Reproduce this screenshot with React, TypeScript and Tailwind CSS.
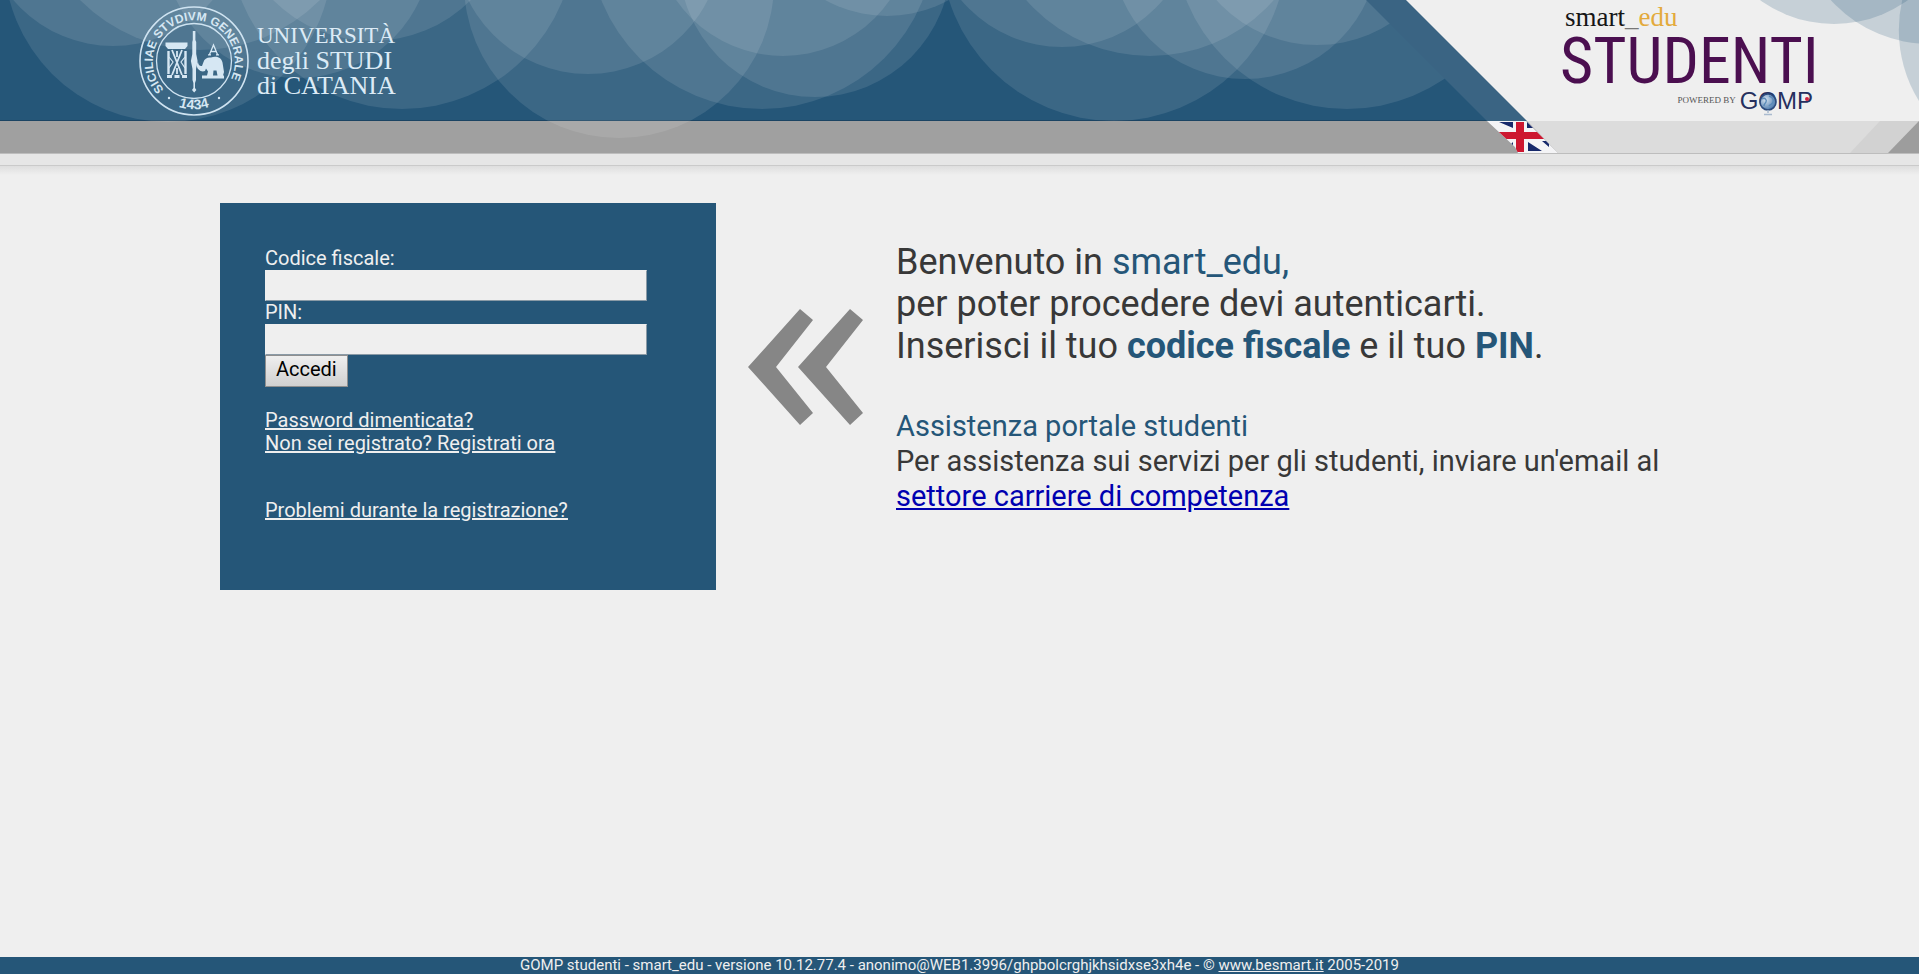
import { FormEvent } from "react";

// cx, cy, r of the translucent discs that hang from the top edge
const bubbles = [
  [168, -42, 164], [113, -85, 131], [200, -119, 169], [298, -56, 134],
  [402, -64, 173], [372, -99, 140], [619, -17, 155], [588, -60, 134],
  [762, -64, 173], [815, -39, 136], [783, -74, 130], [887, -112, 128],
  [1114, -52, 173], [1062, -85, 132], [1150, -109, 165], [1245, -55, 134],
  [1347, -64, 173], [1317, -90, 135],
];

function Seal() {
  return (
    <svg viewBox="0 0 112 112" className="w-28 h-28" role="img" aria-label="Siciliae Studium Generale 1434">
      <defs>
        <path id="ring-top" d="M 26 84.500 A 41 41 0 1 1 90 79"/>
        <path id="ring-bottom" d="M 20 89 A 50 50 0 0 0 92 89"/>
      </defs>
      <g fill="none" stroke="#cfe3f1">
        <circle cx="56" cy="56" r="54" strokeWidth="1.6"/>
        <circle cx="56" cy="56" r="37.5" strokeWidth="1.3"/>
      </g>
      <g fill="#d6e7f3" className="font-['Liberation_Sans',sans-serif] text-[12px] font-bold">
        <text><textPath href="#ring-top">SICILIAE STVDIVM GENERALE</textPath></text>
        <text textAnchor="middle" className="text-[14px]"><textPath href="#ring-bottom" startOffset="50%">1434</textPath></text>
      </g>
      <g fill="#d6e7f3">
        <circle cx="31" cy="93" r="1.2"/>
        <circle cx="81" cy="93" r="1.2"/>
        {/* central staff */}
        <path d="M54.8 26h2.6v9l.8 2v12l1.4 7-1.6 8v11l-1 3v5l1.4 2-2.2 2.5-2.2-2.5 1.4-2v-5l-.9-3V64l-1.6-8 1.4-7V37l.5-2z"/>
        {/* column capital and base */}
        <path d="M27.5 37.5h22v3.500l-2.500 3h-17l-2.500-3zM29 70h5v3h-5zM36.500 70h5v3h-5zM44 70h5v3h-5z"/>
        {/* elephant */}
        <path d="M60 56.5c0 3 1.5 5 4 4.5l1.5-4c1-3.5 4-5 7.5-4.5 5-1.5 10-.5 11.5 5l1.5 9.5-1 3.5h1v3H64v-3h5l1-4-2-3-1 2.5c-4 1.5-8-1.5-8.5-6zM75 70.5h4.5l-1-5h-3z" fillRule="evenodd"/>
      </g>
      <g fill="none" stroke="#d6e7f3">
        <path d="M30.500 46v23M47.500 46v23" strokeWidth="2.400"/>
        <path d="M34 45l10 25M44 45L34 70M39 46v6M39 63v6" strokeWidth="1.800"/>
        <path d="M31 52l4 5-4 6M47 52l-4 5 4 6" strokeWidth="1.200"/>
        <path d="M71.5 49.5l4-9.500 4 9.500M73 46.500h5M70 49.800h3M78 49.800h3" strokeWidth="1.300"/>
      </g>
    </svg>
  );
}

function Globe() {
  return (
    <svg viewBox="0 0 20 24" className="absolute left-[18px] top-px w-5 h-6" aria-hidden="true">
      <defs>
        <radialGradient id="globe" cx="35%" cy="35%" r="75%">
          <stop offset="0" stopColor="#d5e3f0"/>
          <stop offset="1" stopColor="#3d6ea5"/>
        </radialGradient>
      </defs>
      <circle cx="10" cy="10" r="8" fill="url(#globe)" stroke="#2b4a7d" strokeWidth="1.6"/>
      <path d="M4 7c3-2 5 1 4 3s-2 2-2 4M11 4c3 1 5 3 4 6s-3 2-4 4" fill="none" stroke="#5a8ab8" strokeWidth="1.4"/>
      <path d="M10 18v3M6 22.5h8" stroke="#a9bacf" strokeWidth="1.5"/>
    </svg>
  );
}

function UkFlag() {
  return (
    <svg viewBox="0 0 76 32" className="w-[76px] h-8" aria-hidden="true">
      <clipPath id="flag-cut"><path d="M5 0h39l32 32H36l-3-6-15-14z"/></clipPath>
      <g clipPath="url(#flag-cut)">
        <path d="M0 0h76v32H0z" fill="#f4f4f6"/>
        <path d="M17 1h14v6zM45 1h6v6h-6zM31 21v9h-9zM46 21l14 9H46zM60 20h7v6z" fill="#17296b"/>
        <path d="M34 1h8v10h22v7H42v13h-8V18H10v-7h24z" fill="#cd1730"/>
      </g>
    </svg>
  );
}

function Header() {
  return (
    <header className="relative">
      <div className="h-[121px] bg-[#255678] border-b border-[#1b4463]"/>
      <div className="h-8 bg-[#a0a0a0]"/>
      <svg className="absolute left-0 top-0 w-[1560px] h-[153px]" viewBox="0 0 1560 153" aria-hidden="true">
        {bubbles.map(([cx, cy, r]) => (
          <circle key={cx} cx={cx} cy={cy} r={r} fill="#fff" fillOpacity="0.1"/>
        ))}
      </svg>
      <svg className="absolute right-0 top-0 w-[560px] h-[153px]" viewBox="1359 0 560 153" aria-hidden="true">
        <path d="M1366 0h53l121 121h-53z" fill="#3a6483"/>
        <path d="M1406 0h513v121h-392z" fill="#efefef"/>
        <path d="M1527 121h392v32h-361z" fill="#dcdcdc"/>
        <path d="M1880 121h39v32h-69z" fill="#d2d2d2"/>
        <path d="M1919 121v32h-31z" fill="#9d9d9d"/>
        <g fill="#255678" fillOpacity="0.2">
          <circle cx="1834" cy="-102" r="126"/>
          <circle cx="1930" cy="-90" r="134"/>
          <path d="M1919 -41A135 135 0 0 0 1919 101z"/>
        </g>
      </svg>
      <div className="absolute inset-0 flex justify-between">
        <div className="flex items-start gap-[7px] pl-[138px] pt-[5px]">
          <Seal/>
          <p className="flex flex-col pt-[18px] font-['Liberation_Serif',serif] leading-[25px] text-[#dcebf6]">
            <span className="text-[23px]">UNIVERSITÀ</span>
            <span className="text-[26px]">degli STUDI</span>
            <span className="text-[26px]">di CATANIA</span>
          </p>
        </div>
        <div className="flex items-start">
          <a href="#en" aria-label="English" className="mt-[121px] mr-0.5"><UkFlag/></a>
          <div className="w-[359px] pr-[106px] pt-px">
            <p className="pl-[5px] font-['Liberation_Serif',serif] text-[27px] leading-8 text-[#161616]">
              smart<span className="text-[#777]">_</span><span className="text-[#e3aa3c]">edu</span>
            </p>
            <p className="whitespace-nowrap font-['Roboto_Condensed',Roboto,sans-serif] text-[64px] leading-[58px] text-[#4b0f50]">STUDENTI</p>
            <p className="flex items-center justify-end gap-1 text-[#555]">
              <span className="font-['Liberation_Serif',serif] text-[9px]">POWERED BY</span>
              <span className="relative font-['Liberation_Sans',sans-serif] text-[24px] leading-5 text-[#26305e]">
                GOMP
                <Globe/>
                <span className="absolute right-1 top-1.5 size-1 rounded-full bg-[#d0203f]"/>
              </span>
            </p>
          </div>
        </div>
      </div>
    </header>
  );
}

function LoginBox() {
  const onSubmit = (e: FormEvent) => e.preventDefault();
  const field = "block w-full h-[31px] px-1 bg-[#efefef] text-black border border-[#efefef] border-r-[#8a9aa6] border-b-[#8a9aa6] outline-none";

  return (
    <section className="w-[496px] h-[387px] shrink-0 bg-[#255678] px-[45px] pt-[44px] text-[20px] leading-[23px] text-[#efefef]">
      <form onSubmit={onSubmit} className="w-[382px]">
        <label htmlFor="cf" className="block">Codice fiscale:</label>
        <input id="cf" type="text" className={field}/>
        <label htmlFor="pin" className="block">PIN:</label>
        <input id="pin" type="password" className={field}/>
        <button type="submit"
                className="block h-8 px-[10px] pb-1 text-black bg-linear-to-b from-[#efefef] to-[#d0d0d0] border border-[#8f8f8f]">
          Accedi
        </button>
      </form>
      <nav className="mt-[22px] flex flex-col items-start underline">
        <a href="#password">Password dimenticata?</a>
        <a href="#registrati">Non sei registrato? Registrati ora</a>
        <a href="#problemi" className="mt-[44px]">Problemi durante la registrazione?</a>
      </nav>
    </section>
  );
}

export default function App() {
  return (
    <div className="min-h-screen flex flex-col bg-[#efefef] font-[Roboto,sans-serif] text-[#383838]">
      <Header/>
      <div className="h-3 bg-[#e6e6e6] border-t border-[#bdbdbd]"/>
      <div className="h-2.5 bg-linear-to-b from-[#dedede] to-[#efefef] border-t border-[#cacaca]"/>

      <main className="grow flex items-start gap-8 pl-[220px] pt-[28px]">
        <LoginBox/>
        <svg viewBox="0 0 116 116" className="w-[116px] h-[116px] shrink-0 mt-[106px]" fill="#868686" aria-hidden="true">
          <path d="M0 58L52 0l13 11-37 47 37 46-13 12z"/>
          <path d="M50 58l52-58 13 11-37 47 37 46-13 12z"/>
        </svg>
        <div className="pt-[38px]">
          <p className="text-[36px] leading-[42px]">
            Benvenuto in <span className="text-[#255678]">smart_edu,</span><br/>
            per poter procedere devi autenticarti.<br/>
            Inserisci il tuo <strong className="text-[#255678]">codice fiscale</strong> e il tuo <strong className="text-[#255678]">PIN</strong>.
          </p>
          <div className="mt-[42px] text-[29px] leading-[35px]">
            <h2 className="text-[#255678]">Assistenza portale studenti</h2>
            <p>
              Per assistenza sui servizi per gli studenti, inviare un'email al<br/>
              <a href="#carriere" className="text-[#0000b0] underline">settore carriere di competenza</a>
            </p>
          </div>
        </div>
      </main>

      <footer className="bg-[#255678] text-center text-[15px] leading-[17px] text-[#efefef]">
        GOMP studenti - smart_edu - versione 10.12.77.4 - anonimo@WEB1.3996/ghpbolcrghjkhsidxse3xh4e - © <a href="#besmart" className="underline">www.besmart.it</a> 2005-2019
      </footer>
    </div>
  );
}
